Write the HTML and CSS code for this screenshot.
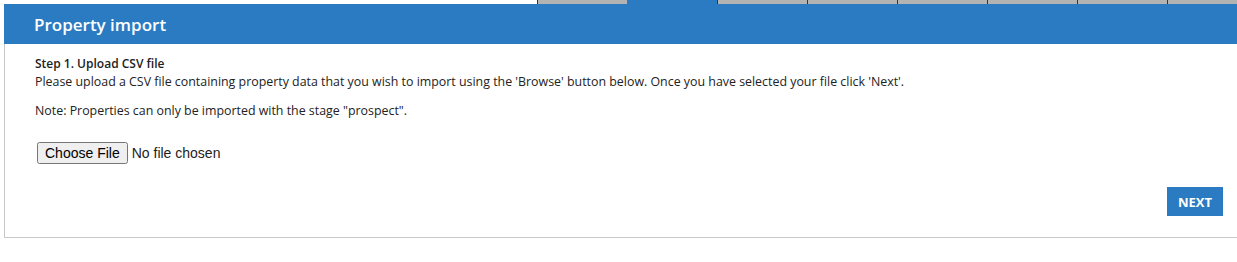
FILE: index.html
```html
<!DOCTYPE html>
<html lang="en">
<head>
    <meta charset="UTF-8">
    <title>Property import</title>
    <link rel="stylesheet" href="styles.css">
</head>
<body>
    <div class="tabs">
        <span class="tab"></span>
        <span class="tab active"></span>
        <span class="tab"></span>
        <span class="tab"></span>
        <span class="tab"></span>
        <span class="tab"></span>
        <span class="tab"></span>
        <span class="tab"></span>
    </div>

    <div class="panel">
        <div class="panel-header">
            <h1>Property import</h1>
        </div>
        <div class="panel-body">
            <p class="step">Step 1. Upload CSV file</p>
            <p>Please upload a CSV file containing property data that you wish to import using the 'Browse' button below. Once you have selected your file click 'Next'.</p>
            <p class="note">Note: Properties can only be imported with the stage "prospect".</p>
            <div class="upload">
                <input type="file" accept=".csv">
            </div>
            <div class="actions">
                <button class="next-btn">NEXT</button>
            </div>
        </div>
    </div>
</body>
</html>
```

FILE: styles.css
```css
body {
    margin: 0;
    padding: 0;
    background-color: white;
    color: #222;
    font-family: "Open Sans", "Noto Sans", Arial, sans-serif;
    font-size: 12px;
    overflow: hidden;
}

.tabs {
    display: flex;
    height: 4px;
    padding-left: 537px;
}

.tab {
    width: 89px;
    flex-shrink: 0;
    background-color: #b3b3b3;
    border-left: 1px solid #333;
}

.tab.active {
    background-color: #2a7bc2;
    border-left-color: #2a7bc2;
}

.tab.active + .tab {
    border-left-color: #333;
}

.panel {
    margin-left: 4px;
    width: 1260px;
    border-left: 1px solid #c8c8c8;
    border-bottom: 1px solid #c8c8c8;
}

.panel-header {
    background-color: #2a7bc2;
    height: 40px;
    display: flex;
    align-items: center;
    padding-left: 30px;
    margin-left: -1px;
}

.panel-header h1 {
    margin: 0;
    color: white;
    font-size: 17px;
    font-weight: 600;
}

.panel-body {
    padding: 11px 0 21px 30px;
    width: 1188px;
}

.panel-body p {
    margin: 0 0 11px;
    line-height: 18px;
    font-size: 12.4px;
}

.panel-body p.step {
    font-size: 12px;
    font-weight: 600;
    margin: 0;
}

.upload {
    padding-top: 11px;
    padding-left: 2px;
}

.upload input {
    font-family: Arial, sans-serif;
    font-size: 14px;
}

.actions {
    display: flex;
    justify-content: flex-end;
    margin-top: 23px;
}

.next-btn {
    background-color: #2a7bc2;
    color: white;
    border: none;
    font-family: "Open Sans", sans-serif;
    font-weight: 700;
    font-size: 13px;
    width: 56px;
    height: 29px;
    padding: 0;
    cursor: pointer;
}
```
